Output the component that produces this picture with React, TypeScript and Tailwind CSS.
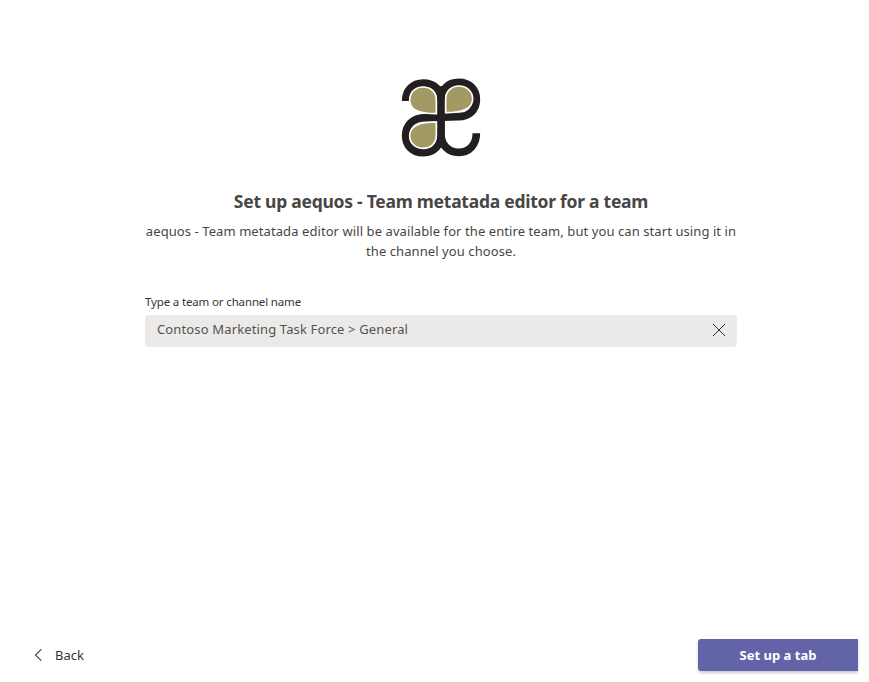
function Logo() {
  return (
    <svg className="size-[100px]" viewBox="0 0 300 300" fill="none" aria-label="aequos">
      <g stroke="#231f20" strokeWidth="23">
        <path d="M44 99C44 67 66 45 96 45C130 45 150 66 150 98V198C150 231 172 253 203 253C235 253 256 230 256 196" />
        <path d="M150 98C150 66 170 43 203 43C235 43 256 64 256 94C256 126 235 146 202 146C165 146 145 149 105 149C65 149 44 172 44 203C44 233 65 254 97 254C130 254 150 231 150 198" />
      </g>
      <path d="M139 62L150 53L161 62V234H139Z" fill="#231f20" />
      <g fill="#a39962" stroke="#fff" strokeWidth="5">
        <path d="M136 137V96C136 72 118 57 96 57C73 57 56 73 56 96C56 123 78 137 136 137Z" />
        <path d="M164 134V94C164 70 181 54 204 54C228 54 245 71 245 93C245 119 223 134 164 134Z" />
        <path d="M136 162V201C136 226 119 241 97 241C73 241 56 225 56 203C56 177 78 162 136 162Z" />
      </g>
    </svg>
  );
}

export default function App() {
  return (
    <main className="flex h-[682px] w-[869px] flex-col bg-white font-['Noto_Sans',sans-serif] text-sm text-[#484644]">
      <section className="ml-[145px] flex w-[592px] flex-col items-center pt-[68px]">
        <Logo />
        <h1 className="mt-[21px] text-[17.5px] leading-6 font-bold tracking-[-0.26px] whitespace-nowrap">
          Set up aequos - Team metatada editor for a team
        </h1>
        <p className="mt-2 text-center text-[13px] leading-5 tracking-[0.08px] whitespace-nowrap text-[#484644]">
          aequos - Team metatada editor will be available for the entire team, but you can start using it in
          <br />
          the channel you choose.
        </p>
        <label className="mt-[33px] self-start text-[11.5px] leading-4 tracking-[-0.15px] text-[#363432]">Type a team or channel name</label>
        <div className="mt-[5px] flex h-8 w-full items-center justify-between rounded bg-[#ebeae8] pr-[11px] pb-[2px] pl-3">
          <span className="pb-[2px] text-[13px] leading-5 tracking-[0.14px] text-[#555351]">Contoso Marketing Task Force &gt; General</span>
          <svg className="size-[14px]" viewBox="0 0 14 14" stroke="#33312f" strokeWidth="1">
            <path d="M1 1L13 13M13 1L1 13" />
          </svg>
        </div>
      </section>
      <footer className="mt-auto mb-[11px] flex h-8 items-center justify-between pr-[11px] pl-[34px]">
        <button className="flex items-center gap-[13px] text-[13px] leading-5 text-[#363432]">
          <svg className="h-[14px] w-2" viewBox="0 0 8 14" fill="none" stroke="#484644" strokeWidth="1.1">
            <path d="M7.5 1.2L1.5 7L7.5 12.8" />
          </svg>
          Back
        </button>
        <button className="h-8 w-40 rounded-l-[3px] bg-[#6264a7] text-[13px] leading-5 font-bold text-white shadow-[0_2px_3px_rgba(0,0,0,0.2)]">
          Set up a tab
        </button>
      </footer>
    </main>
  );
}
